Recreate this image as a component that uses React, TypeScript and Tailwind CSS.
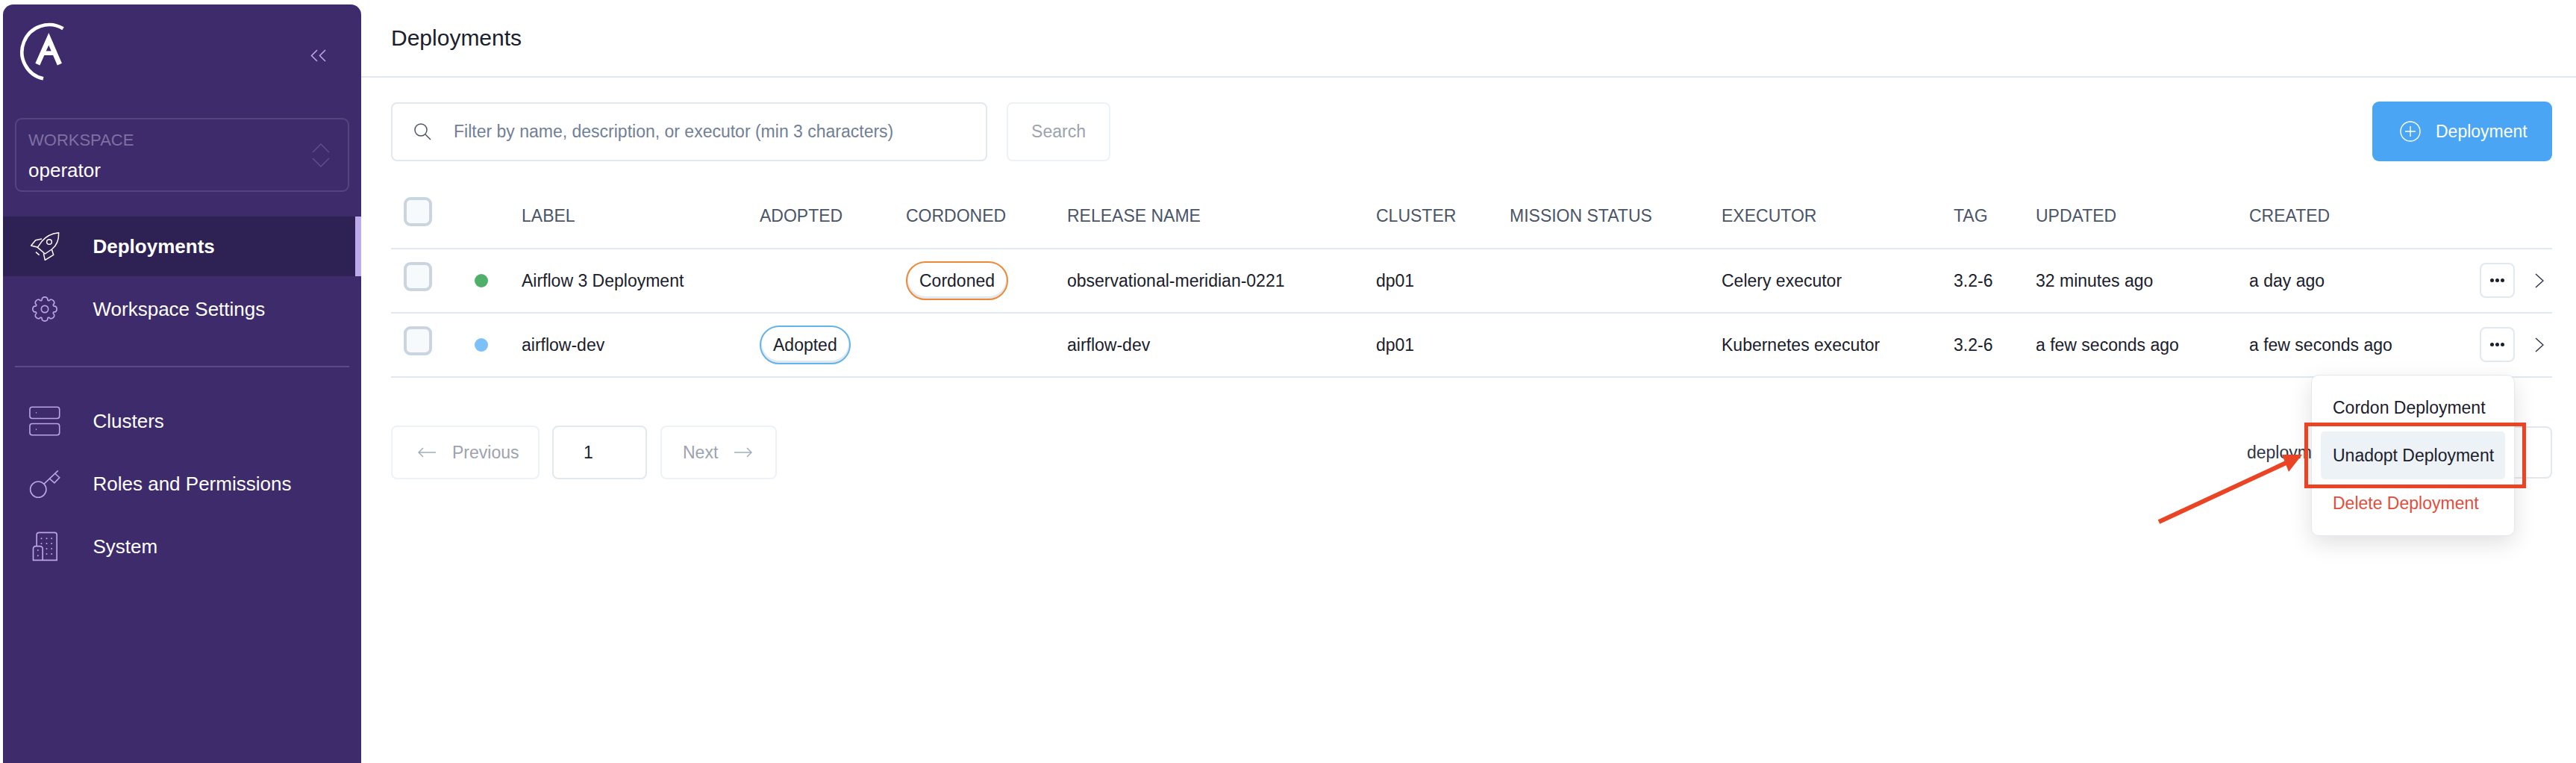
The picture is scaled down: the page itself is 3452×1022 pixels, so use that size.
import type { ReactNode } from "react";

const COLS = "grid grid-cols-[112px_63px_319px_196px_216px_414px_179px_284px_311px_110px_286px_309px_97px] items-center";

const gearPath = (() => {
  const cx = 180, cy = 1242;
  let d = "";
  for (let i = 0; i < 8; i++) {
    const a = (i * Math.PI) / 4 - Math.PI / 2;
    const pt = (r: number, off: number) => `${(cx + r * Math.cos(a + off)).toFixed(1)} ${(cy + r * Math.sin(a + off)).toFixed(1)}`;
    d += `${i === 0 ? "M" : "L"}${pt(39, -0.3)} C${pt(54, -0.26)} ${pt(54, 0.26)} ${pt(39, 0.3)} Q${pt(35, 0.39)} ${pt(39, 0.485)} `;
  }
  return d + "Z";
})();

function Logo() {
  return (
    <svg viewBox="70 85 195 250" className="w-[65px] h-[83px]" fill="none" stroke="#fff">
      <path d="M255 116A110 110 0 1 0 175 318" strokeWidth="14" />
      <path d="M152 260L197 158L241 260" strokeWidth="20" />
      <path d="M166 215H228" strokeWidth="17" />
    </svg>
  );
}

function RocketIcon() {
  return (
    <svg viewBox="117 928 120 120" className="w-[40px] h-[40px]" fill="none" stroke="#fff" strokeWidth="4.5" strokeLinejoin="round">
      <path d="M233 933C205 936 182 946 165 968L148 992L178 1018L205 1000C225 985 234 965 233 933Z" />
      <path d="M165 958L140 963L122 985L150 992" />
      <path d="M205 1000L212 1022L178 1043L172 1016" />
      <path d="M141 1011L155 1023" />
      <circle cx="195" cy="970" r="10" />
    </svg>
  );
}

function GearIcon() {
  return (
    <svg viewBox="123 1185 114 114" className="w-[38px] h-[38px]" fill="none" stroke="#b9a5e8" strokeWidth="5">
      <path d={gearPath} />
      <circle cx="180" cy="1242" r="14" />
    </svg>
  );
}

function ClustersIcon() {
  return (
    <svg viewBox="115 180 132 126" className="w-[44px] h-[42px]" fill="none" stroke="#b9a5e8" strokeWidth="5">
      <rect x="118" y="184" width="125" height="48" rx="10" />
      <rect x="118" y="254" width="125" height="48" rx="10" />
      <circle cx="145" cy="208" r="2.5" fill="#b9a5e8" stroke="none" />
      <circle cx="145" cy="278" r="2.5" fill="#b9a5e8" stroke="none" />
    </svg>
  );
}

function KeyIcon() {
  return (
    <svg viewBox="115 422 130 122" className="w-[43px] h-[41px]" fill="none" stroke="#b9a5e8" strokeWidth="5">
      <circle cx="153" cy="505" r="33" />
      <path d="M177 482L235 427" />
      <path d="M200 460L220 478L241 456L222 438" />
    </svg>
  );
}

function BuildingIcon() {
  const dots = [[167, 698], [188, 698], [208, 698], [167, 718], [188, 718], [208, 718], [188, 739], [208, 739], [188, 760], [208, 760], [153, 745], [153, 767]];
  return (
    <svg viewBox="130 670 104 120" className="w-[35px] h-[40px]" fill="none" stroke="#b9a5e8" strokeWidth="5">
      <path d="M148 728V683Q148 674 157 674H220Q229 674 229 683V785H134V740Q134 729 145 729H160Q172 729 172 740V785" />
      {dots.map(([x, y]) => (
        <circle key={`${x}-${y}`} cx={x} cy={y} r="3" fill="#b9a5e8" stroke="none" />
      ))}
    </svg>
  );
}

function NavItem({ icon, label, active }: { icon: ReactNode; label: string; active?: boolean }) {
  return (
    <div className={`h-[80px] flex items-center pl-[35px] gap-[43.5px] text-[26px] text-white ${active ? "bg-[#2e2154] border-r-[8px] border-[#bdaaea] font-bold" : ""}`}>
      <div className="w-[42px] flex justify-center">{icon}</div>
      <span>{label}</span>
    </div>
  );
}

function Sidebar() {
  return (
    <aside className="w-[480px] shrink-0 bg-[#3d2b6b] rounded-t-[14px] flex flex-col">
      <div className="h-[152px] flex items-start justify-between pl-[19px] pr-[46px] pt-[22px]">
        <Logo />
        <svg viewBox="0 0 22 17" className="w-[22px] h-[17px] mt-[38px]" fill="none" stroke="#b9a5e8" strokeWidth="1.6">
          <path d="M9 1L1.5 8.5L9 16M20 1L12.5 8.5L20 16" />
        </svg>
      </div>
      <div className="mx-[16px] h-[99px] rounded-[9px] border-2 border-[#55457f] flex items-center justify-between pl-[16px] pr-[24px]">
        <div className="flex flex-col pt-[7px]">
          <span className="text-[22px] leading-[34px] text-[#7f70a3]">WORKSPACE</span>
          <span className="text-[26px] leading-[46px] text-white">operator</span>
        </div>
        <svg viewBox="0 0 24 32" className="w-[24px] h-[32px]" fill="none" stroke="#5c4d85" strokeWidth="1.6">
          <path d="M1 12L12 1L23 12M1 20L12 31L23 20" />
        </svg>
      </div>
      <nav className="mt-[33px] flex flex-col">
        <NavItem icon={<RocketIcon />} label="Deployments" active />
        <div className="mt-[4px]">
          <NavItem icon={<GearIcon />} label="Workspace Settings" />
        </div>
        <div className="mx-[16px] mt-[36px] h-[2px] bg-[#5a4a85]" />
        <div className="mt-[32px] flex flex-col gap-[4px]">
          <NavItem icon={<ClustersIcon />} label="Clusters" />
          <NavItem icon={<KeyIcon />} label="Roles and Permissions" />
          <NavItem icon={<BuildingIcon />} label="System" />
        </div>
      </nav>
    </aside>
  );
}

function Checkbox() {
  return <div className="w-[38px] h-[39px] ml-[17px] mb-[12px] rounded-[9px] border-4 border-[#cbd5e0] bg-[#f7fafc]" />;
}

function Badge({ label, color }: { label: string; color: string }) {
  return (
    <span className={`inline-flex h-[52px] items-center px-[16px] rounded-full border-[2.5px] shadow-[inset_0_-2px_0_1px_#e2e8f0] text-[#1a202c] ${color}`}>
      {label}
    </span>
  );
}

function Row(props: {
  dot: string; label: string; adopted?: boolean; cordoned?: boolean; release: string;
  executor: string; updated: string; created: string;
}) {
  return (
    <div className={`${COLS} h-[86px] border-b-2 border-[#e2e8f0] text-[#1a202c]`}>
      <Checkbox />
      <span className={`w-[18px] h-[18px] rounded-full ${props.dot}`} />
      <span>{props.label}</span>
      <div>{props.adopted && <Badge label="Adopted" color="border-[#63b3ed]" />}</div>
      <div>{props.cordoned && <Badge label="Cordoned" color="border-[#ed8936]" />}</div>
      <span>{props.release}</span>
      <span>dp01</span>
      <span />
      <span>{props.executor}</span>
      <span>3.2-6</span>
      <span>{props.updated}</span>
      <span>{props.created}</span>
      <div className="flex items-center">
        <button className="w-[47px] h-[47px] mb-[2px] rounded-[8px] border-2 border-[#e2e8f0] flex items-center justify-center gap-[2px]">
          <span className="w-[5px] h-[5px] rounded-full bg-[#1a202c]" />
          <span className="w-[5px] h-[5px] rounded-full bg-[#1a202c]" />
          <span className="w-[5px] h-[5px] rounded-full bg-[#1a202c]" />
        </button>
        <svg viewBox="0 0 12 20" className="w-[12px] h-[20px] ml-[27px]" fill="none" stroke="#2d3748" strokeWidth="1.5">
          <path d="M1 1L11 10L1 19" />
        </svg>
      </div>
    </div>
  );
}

export default function App() {
  return (
    <div className="relative w-full h-screen overflow-hidden bg-white flex pt-[6px] pl-[4px] font-['Liberation_Sans',Arial,sans-serif] text-[23px]">
      <Sidebar />
      <main className="flex-1 -mt-[6px] flex flex-col">
        <header className="h-[104px] border-b-2 border-[#e2e8f0] flex items-center pl-[40px] pb-[2px] text-[30px] text-[#1a202c]">
          Deployments
        </header>
        <div className="pl-[40px] pr-[32px]">
          <div className="mt-[32px] flex items-center">
            <div className="w-[799px] h-[79px] rounded-[8px] border-2 border-[#e2e8f0] flex items-center pl-[28px] gap-[30px] text-[#718096]">
              <svg viewBox="0 0 24 24" className="w-[24px] h-[24px]" fill="none" stroke="#4a5568" strokeWidth="1.5">
                <circle cx="10" cy="10" r="8" />
                <path d="M16 16L23 23" />
              </svg>
              <span>Filter by name, description, or executor (min 3 characters)</span>
            </div>
            <button className="ml-[26px] w-[139px] h-[79px] rounded-[8px] border-2 border-[#edf2f7] text-[#9ca3af]">Search</button>
            <button className="ml-auto w-[241px] h-[80px] rounded-[9px] bg-[#4ba5f5] text-white flex items-center pl-[37px] gap-[20px]">
              <svg viewBox="0 0 28 28" className="w-[28px] h-[28px]" fill="none" stroke="#fff" strokeWidth="1.4">
                <circle cx="14" cy="14" r="13" />
                <path d="M14 7V21M7 14H21" />
              </svg>
              Deployment
            </button>
          </div>
          <div className={`${COLS} mt-[30px] h-[88px] border-b-2 border-[#e2e8f0] text-[#4a5568]`}>
            <Checkbox />
            <span />
            <span>LABEL</span>
            <span>ADOPTED</span>
            <span>CORDONED</span>
            <span>RELEASE NAME</span>
            <span>CLUSTER</span>
            <span>MISSION STATUS</span>
            <span>EXECUTOR</span>
            <span>TAG</span>
            <span>UPDATED</span>
            <span>CREATED</span>
            <span />
          </div>
          <Row dot="bg-[#4fb06c]" label="Airflow 3 Deployment" cordoned release="observational-meridian-0221" executor="Celery executor" updated="32 minutes ago" created="a day ago" />
          <Row dot="bg-[#7cc0f8]" label="airflow-dev" adopted release="airflow-dev" executor="Kubernetes executor" updated="a few seconds ago" created="a few seconds ago" />
          <div className="mt-[64px] flex items-center">
            <button className="w-[199px] h-[72px] rounded-[8px] border-2 border-[#edf2f7] text-[#9ca3af] flex items-center pl-[34px] gap-[22px]">
              <svg viewBox="0 0 24 14" className="w-[24px] h-[14px]" fill="none" stroke="#a0aec0" strokeWidth="1.5">
                <path d="M24 7H1M7 1L1 7L7 13" />
              </svg>
              Previous
            </button>
            <div className="ml-[17px] w-[127px] h-[72px] rounded-[8px] border-2 border-[#e2e8f0] text-[#1a202c] flex items-center pl-[40px]">1</div>
            <button className="ml-[18px] w-[156px] h-[72px] rounded-[8px] border-2 border-[#edf2f7] text-[#9ca3af] flex items-center pl-[28px] gap-[22px]">
              Next
              <svg viewBox="0 0 24 14" className="w-[24px] h-[14px]" fill="none" stroke="#a0aec0" strokeWidth="1.5">
                <path d="M0 7H23M17 1L23 7L17 13" />
              </svg>
            </button>
            <span className="ml-auto w-[84px] whitespace-nowrap text-[#2d3748]">deploym</span>
            <div className="ml-[155px] w-[170px] h-[70px] rounded-[8px] border-2 border-[#e2e8f0]" />
          </div>
        </div>
      </main>

      <div className="absolute left-[3097px] top-[502px] w-[273px] h-[216px] rounded-[10px] border border-[#e2e8f0] bg-white shadow-[0_10px_30px_rgba(0,0,0,0.12)] flex flex-col px-[12px] py-[11px] text-[#1a202c]">
        <div className="h-[64px] flex items-center pl-[16px]">Cordon Deployment</div>
        <div className="h-[64px] flex items-center pl-[16px] rounded-[5px] bg-[#edf2f7]">Unadopt Deployment</div>
        <div className="h-[64px] flex items-center pl-[16px] text-[#e24d3c]">Delete Deployment</div>
      </div>
      <div className="absolute left-[3088px] top-[566px] w-[297px] h-[88px] border-[5px] border-[#ea4425]" />
      <svg viewBox="2880 600 220 110" className="absolute left-[2880px] top-[600px] w-[220px] h-[110px]" fill="#ea4425" stroke="none">
        <path d="M2893 699L3072 616" stroke="#ea4425" strokeWidth="6" />
        <path d="M3058 609L3085 609L3067 632Z" />
      </svg>
    </div>
  );
}
